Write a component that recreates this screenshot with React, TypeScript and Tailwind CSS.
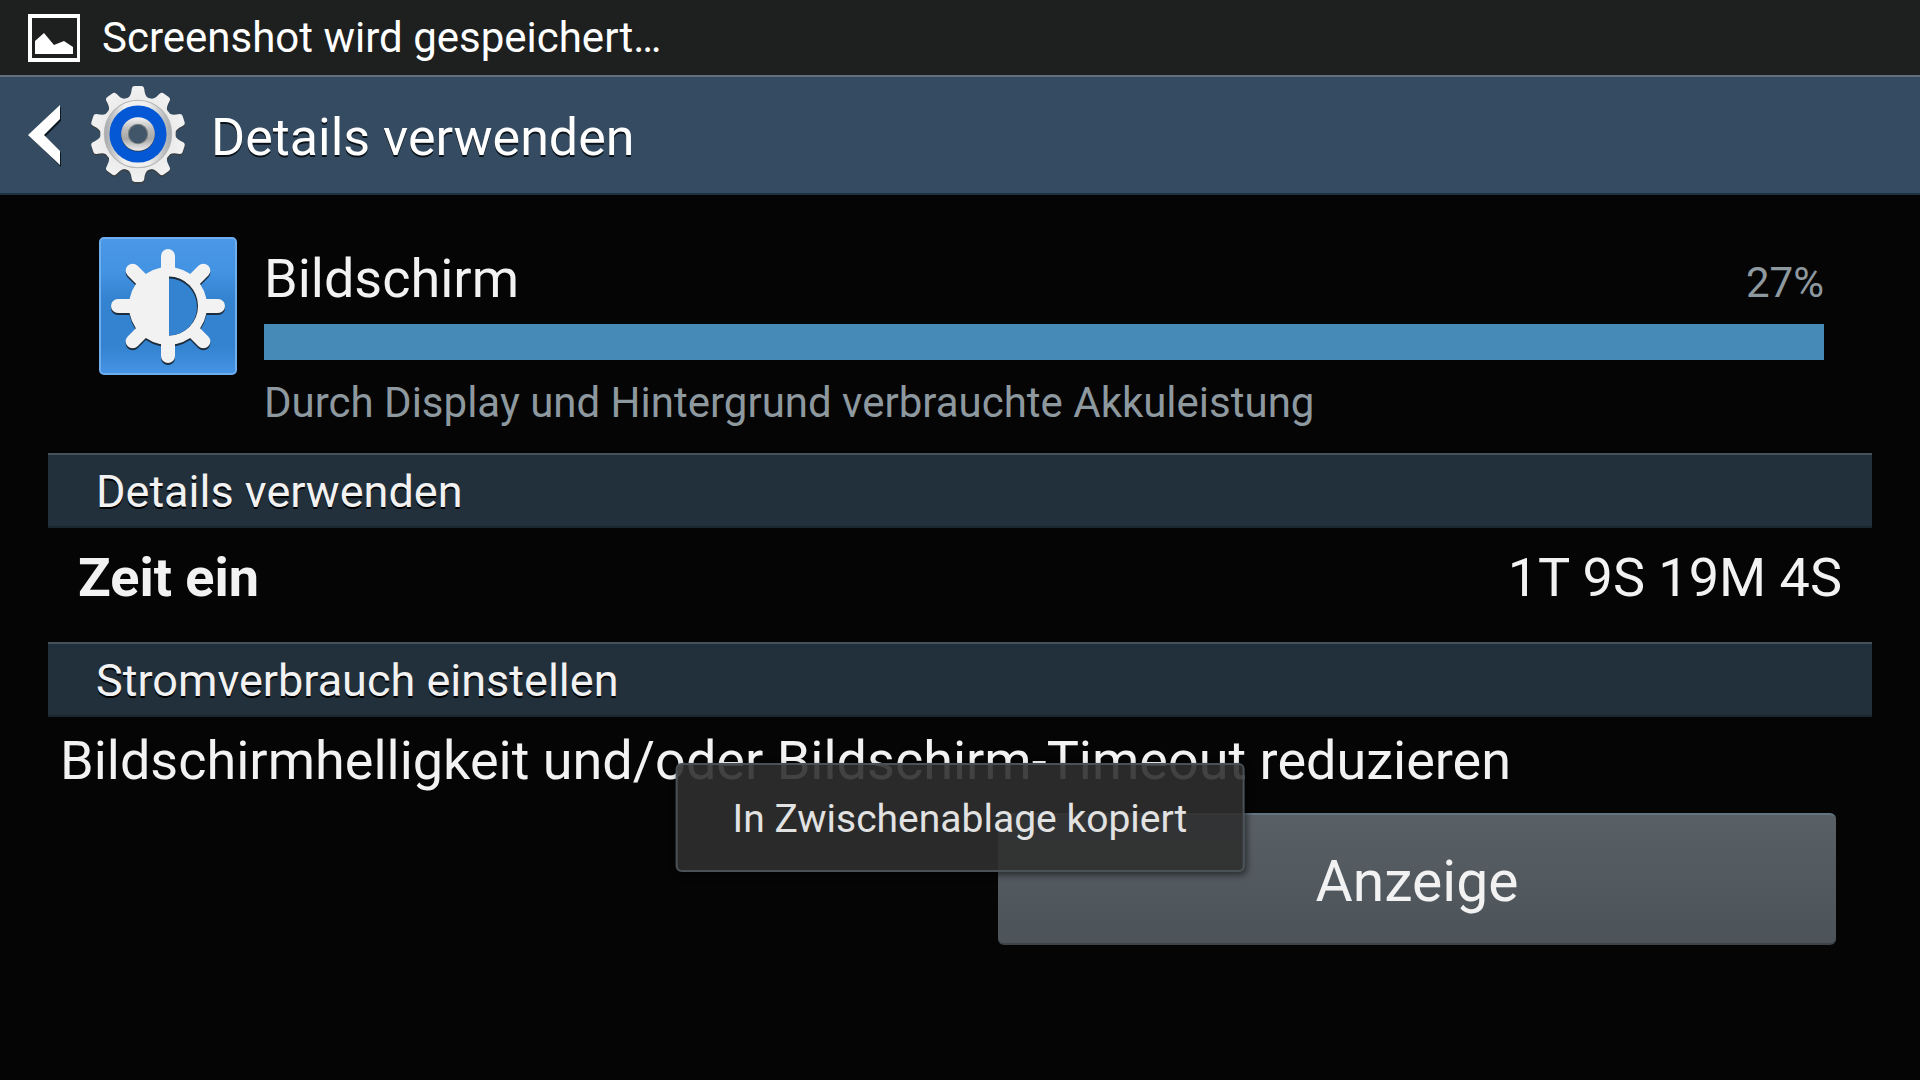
import React from 'react';

const TEETH = [0, 36, 72, 108, 144, 180, 216, 252, 288, 324];
const RAYS = [0, 45, 90, 135, 180, 225, 270, 315];

const PictureIcon = () => (
  <svg viewBox="0 0 52 48" className="h-12 w-[52px] shrink-0" aria-hidden="true">
    <path fill="#fff" fillRule="evenodd" d="M0 0H52V48H0ZM4 4V44H49V4Z" />
    <path fill="#fff" d="M7 40V27L16 19L26 31L36 27L45 33V40Z" />
  </svg>
);

const ChevronIcon = () => (
  <svg viewBox="0 -1 34 64" className="h-16 w-[34px]" aria-hidden="true">
    <path fill="#0d1820" d="M33 3V17L17 33L33 49V63L2 32Z" />
    <path fill="#fff" d="M32 1V15L16 31L32 47V61L0 31Z" />
  </svg>
);

const GearShape = ({ fill }: { fill: string }) => (
  <g fill={fill}>
    <circle cx="50" cy="50" r="37" />
    {TEETH.map((angle) => (
      <path
        key={angle}
        transform={`rotate(${angle} 50 50)`}
        d="M38 16C42 14.5 43.3 11 43.8 6.5C44.1 4 45 3 47 3H53C55 3 55.9 4 56.2 6.5C56.7 11 58 14.5 62 16L60 22H40Z"
      />
    ))}
  </g>
);

const GearIcon = () => (
  <svg viewBox="1 2 98 98" className="size-[100px]" aria-hidden="true">
    <defs>
      <linearGradient id="gearBody" gradientUnits="userSpaceOnUse" x1="0" y1="3" x2="0" y2="97">
        <stop offset="0" stopColor="#f2f2f2" />
        <stop offset="0.45" stopColor="#dedede" />
        <stop offset="0.7" stopColor="#f0f0f0" />
        <stop offset="1" stopColor="#d6d6d6" />
      </linearGradient>
      <linearGradient id="gearRing" x1="0" y1="0" x2="1" y2="0">
        <stop offset="0" stopColor="#a4a8ab" />
        <stop offset="0.3" stopColor="#f0f0f0" />
        <stop offset="0.65" stopColor="#efefef" />
        <stop offset="1" stopColor="#a4a8ab" />
      </linearGradient>
      <linearGradient id="gearHub" x1="0" y1="0" x2="0" y2="1">
        <stop offset="0" stopColor="#f4f4f4" />
        <stop offset="0.35" stopColor="#bdbdbd" />
        <stop offset="0.65" stopColor="#a8a8a8" />
        <stop offset="1" stopColor="#f0f0f0" />
      </linearGradient>
    </defs>
    <g transform="translate(0 1.5)">
      <GearShape fill="#3a3f42" />
    </g>
    <GearShape fill="url(#gearBody)" />
    <circle cx="50" cy="50" r="33" fill="url(#gearRing)" stroke="#b3b3b3" strokeWidth="1" />
    <circle cx="50" cy="50" r="28" fill="#0458d6" />
    <circle cx="50" cy="51" r="16.5" fill="#27405f" />
    <circle cx="50" cy="50" r="16.5" fill="url(#gearHub)" />
    <circle cx="50" cy="50" r="9.5" fill="#42566a" stroke="#7b7f82" strokeWidth="1" />
  </svg>
);

const SunShape = ({ color }: { color: string }) => (
  <g fill={color} stroke={color} strokeWidth="14" strokeLinecap="round">
    <circle cx="69" cy="69" r="39" stroke="none" />
    {RAYS.map((angle) => (
      <path key={angle} d="M69 69V19" transform={`rotate(${angle} 69 69)`} />
    ))}
  </g>
);

const BrightnessIcon = () => (
  <svg viewBox="0 0 138 138" className="size-[138px] shrink-0" aria-hidden="true">
    <defs>
      <linearGradient id="tile" x1="0" y1="0" x2="0" y2="1">
        <stop offset="0" stopColor="#4a98e6" />
        <stop offset="0.25" stopColor="#4393e3" />
        <stop offset="0.45" stopColor="#3383d0" />
        <stop offset="0.8" stopColor="#3383d0" />
        <stop offset="1" stopColor="#4694e4" />
      </linearGradient>
    </defs>
    <rect x="1" y="1" width="136" height="136" rx="4" fill="url(#tile)" stroke="#6faeee" strokeWidth="2" />
    <g transform="translate(0 2)">
      <SunShape color="#1c2c3b" />
    </g>
    <SunShape color="#f2f2f2" />
    <path fill="#1c2c3b" d="M70 39.5A29 29.5 0 0 1 70 98.5Z" />
    <path fill="#3383d0" d="M70 41.5A28 28.5 0 0 1 70 98.5Z" />
  </svg>
);

const SectionHeader = ({ title }: { title: string }) => (
  <h2 className="h-[75px] border-t-2 border-b-2 border-t-[#43525d] border-b-[#1b272f] bg-[#22303c] pl-12 text-[45px] leading-[74px] text-[#f2f2f2] [text-shadow:0_2px_0_#000]">
    {title}
  </h2>
);

const App: React.FC = () => {
  const usage = 27;

  return (
    <div className="relative min-h-screen bg-[#050505] font-['Roboto',sans-serif] text-[#f2f2f2]">
      <div className="flex h-[75px] items-center gap-[22px] bg-[#1e1f1f] pl-7 text-[42px] leading-[50px] text-white">
        <PictureIcon />
        <span>Screenshot wird gespeichert…</span>
      </div>

      <header className="flex h-[120px] items-center border-t-2 border-b-2 border-t-[#61707c] border-b-[#1f303f] bg-[#344b61] pl-7">
        <button type="button" aria-label="Zurück" className="flex items-center gap-[26px]">
          <ChevronIcon />
          <GearIcon />
        </button>
        <h1 className="pt-[6px] pl-[23px] text-[52px] leading-[64px] text-white [text-shadow:0_2px_0_#0b1218]">Details verwenden</h1>
      </header>

      <main className="px-12 pb-8">
        <section className="flex gap-[27px] pt-[42px] pr-12 pb-[25px] pl-[51px]">
          <BrightnessIcon />
          <div className="min-w-0 flex-1 pt-[10px]">
            <div className="flex items-baseline justify-between">
              <span className="text-[54px] leading-[64px]">Bildschirm</span>
              <span className="text-[42px] leading-[50px] text-[#8d989f]">{usage}%</span>
            </div>
            <div className="mt-[13px] h-9 bg-[#468ab8]" />
            <p className="mt-[18px] text-[42px] leading-[50px] text-[#8d989f]">
              Durch Display und Hintergrund verbrauchte Akkuleistung
            </p>
          </div>
        </section>

        <SectionHeader title="Details verwenden" />
        <div className="flex h-[114px] items-start justify-between px-[30px] pt-[18px] text-[54px] leading-[64px]">
          <span className="font-bold">Zeit ein</span>
          <span>1T 9S 19M 4S</span>
        </div>

        <SectionHeader title="Stromverbrauch einstellen" />
        <p className="pt-3 pb-5 pl-3 text-[54px] leading-[64px]">
          Bildschirmhelligkeit und/oder Bildschirm-Timeout reduzieren
        </p>
        <div className="grid grid-cols-2 gap-28 pr-9">
          <button
            type="button"
            className="col-start-2 h-[132px] rounded-md border-t-2 border-b-2 border-t-[#617482] border-b-[#3c4246] bg-linear-to-b from-[#585f65] to-[#4c5359] pt-[6px] text-[57px] leading-[68px]"
          >
            Anzeige
          </button>
        </div>
      </main>

      <div
        role="status"
        className="absolute bottom-52 left-1/2 -translate-x-1/2 rounded-md border-2 border-[#4b5257] bg-[#2f2f2f]/90 px-[55px] pt-[31px] pb-[28px] text-[39px] leading-[46px] whitespace-nowrap text-[#e2e2e2] shadow-[2px_3px_6px_rgba(0,0,0,0.5)]"
      >
        In Zwischenablage kopiert
      </div>
    </div>
  );
};

export default App;
